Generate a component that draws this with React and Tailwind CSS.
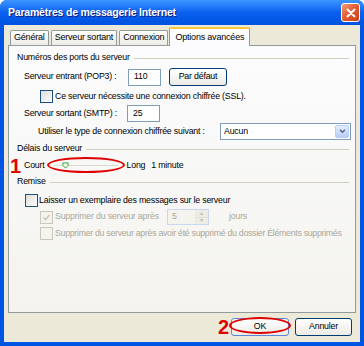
import React from 'react'

const font = { fontFamily: '"Liberation Sans", Arial, sans-serif' }

function GroupLabel({ children }) {
  return (
    <div className="flex items-center h-[12px] pl-[8px] pr-[6px]">
      <span className="pr-[4px] whitespace-nowrap">{children}</span>
      <div className="flex-1 h-px bg-[#D0D0BF]" />
    </div>
  )
}

function Checkbox({ checked, disabled }) {
  return (
    <span
      className={`relative inline-block w-[13px] h-[13px] shrink-0 border ${
        disabled ? 'border-[#CAC8BB] bg-[#F4F3EE]' : 'border-[#1C5180] bg-gradient-to-br from-[#DCDCD7] to-white'
      }`}
    >
      {checked && (
        <svg viewBox="0 0 11 11" className="absolute inset-0 w-[11px] h-[11px]">
          <path d="M2.5 5.5 L4.5 7.5 L8.5 3" fill="none" stroke={disabled ? '#CAC8BB' : '#21A121'} strokeWidth="1.6" />
        </svg>
      )}
    </span>
  )
}

function Input({ value, width, disabled }) {
  return (
    <div
      className={`h-[17px] shrink-0 border border-[#7F9DB9] flex items-center pl-[5px] ${disabled ? 'bg-[#F4F3EE] text-[#ACA899]' : 'bg-white'}`}
      style={{ width }}
    >
      {value}
    </div>
  )
}

function XpButton({ children, className = '' }) {
  return (
    <div
      className={`h-[18px] shrink-0 flex items-center justify-center rounded-[3px] border border-[#003C74] bg-gradient-to-b from-white to-[#ECEBE6] ${className}`}
    >
      {children}
    </div>
  )
}

export default function App() {
  return (
    <div style={font} className="w-[364px] h-[346px] flex flex-col bg-[#0054E3] rounded-t-[7px] overflow-hidden text-[8.8px] tracking-[-0.2px] whitespace-nowrap text-black">
      {/* title bar */}
      <div className="h-[25px] flex items-center justify-between pl-[8px] pr-[4px] bg-gradient-to-b from-[#3D95FF] via-[#0A5FEE] to-[#0053E0]">
        <span className="text-white font-bold text-[10.5px] tracking-[-0.2px]" style={{ textShadow: '1px 1px #0A1E80' }}>
          Paramètres de messagerie Internet
        </span>
        <div className="w-[19px] h-[19px] rounded-[3px] border border-white bg-gradient-to-br from-[#F09A78] via-[#E3582D] to-[#C7401A] flex items-center justify-center">
          <svg viewBox="0 0 10 10" className="w-[10px] h-[10px]">
            <path d="M1.5 1.5 L8.5 8.5 M8.5 1.5 L1.5 8.5" stroke="white" strokeWidth="2" strokeLinecap="round" />
          </svg>
        </div>
      </div>

      {/* body */}
      <div className="flex-1 mx-[4px] mb-[4px] bg-[#ECE9D8] flex flex-col px-[4px] pt-[2px]">
        {/* tabs */}
        <div className="flex items-end h-[18px] pl-[2px] relative z-10 text-[9px]">
          <div className="h-[15px] px-[3px] flex items-center border border-b-0 border-[#919B9C] bg-gradient-to-b from-white to-[#ECEBE6] rounded-t-[2px]">Général</div>
          <div className="ml-[2px] h-[15px] px-[3px] flex items-center border border-b-0 border-[#919B9C] bg-gradient-to-b from-white to-[#ECEBE6] rounded-t-[2px]">Serveur sortant</div>
          <div className="ml-[2px] h-[15px] px-[3px] flex items-center border border-b-0 border-[#919B9C] bg-gradient-to-b from-white to-[#ECEBE6] rounded-t-[2px]">Connexion</div>
          <div className="ml-[1px] h-[19px] -mb-px px-[5px] flex items-center border border-b-0 border-[#919B9C] border-t-2 border-t-[#FFC83C] bg-[#FCFCFE] rounded-t-[2px]">Options avancées</div>
        </div>

        {/* panel */}
        <div className="h-[268px] border border-[#919B9C] bg-gradient-to-b from-[#FCFCFE] to-[#F4F3EE] flex flex-col pt-[6px]">
          <GroupLabel>Numéros des ports du serveur</GroupLabel>

          <div className="mt-[4px] flex items-center h-[18px] pl-[15px]">
            <span className="w-[104px]">Serveur entrant (POP3) :</span>
            <Input value="110" width={33} />
            <XpButton className="ml-[8px] w-[58px]">Par défaut</XpButton>
          </div>

          <div className="mt-[4px] flex items-center h-[13px] pl-[31px] gap-[2px]">
            <Checkbox />
            <span>Ce serveur nécessite une connexion chiffrée (SSL).</span>
          </div>

          <div className="mt-[2px] flex items-center h-[17px] pl-[15px]">
            <span className="w-[103px]">Serveur sortant (SMTP) :</span>
            <Input value="25" width={33} />
          </div>

          <div className="mt-[1px] flex items-center h-[17px] pl-[29px]">
            <span className="w-[182px]">Utiliser le type de connexion chiffrée suivant :</span>
            <div className="w-[131px] h-[17px] border border-[#7F9DB9] bg-white flex items-center justify-between pl-[3px] pr-px">
              <span>Aucun</span>
              <div className="w-[14px] h-[13px] rounded-[2px] bg-gradient-to-b from-[#E6EEFC] to-[#B9CCF6] border border-[#B9CCF6] flex items-center justify-center">
                <svg viewBox="0 0 8 6" className="w-[7px] h-[5px]">
                  <path d="M1 1 L4 4 L7 1" fill="none" stroke="#4D6185" strokeWidth="1.6" />
                </svg>
              </div>
            </div>
          </div>

          <div className="mt-[3px]">
            <GroupLabel>Délais du serveur</GroupLabel>
          </div>

          <div className="mt-[2px] flex items-center h-[17px] relative">
            <span className="text-[#E00000] font-bold text-[20px] leading-none w-[15px] pl-[1px]">1</span>
            <span>Court</span>
            <div className="ml-[5px] w-[72px] h-[17px] relative flex items-center">
              <div className="absolute left-[4px] right-[4px] top-[8px] h-[2px] border-t border-[#ACA899] border-b border-b-white opacity-40" />
              <svg viewBox="0 0 8 8" className="absolute left-[12px] top-[5px] w-[7px] h-[7px]">
                <path d="M1 1 H7 V4 L4 7 L1 4 Z" fill="#F4F3EE" stroke="#21A121" strokeWidth="1" />
              </svg>
              <div className="absolute -left-[3px] top-0 w-[78px] h-[16px] rounded-[50%] border-2 border-[#E00000]" />
            </div>
            <span className="ml-[5px]">Long</span>
            <span className="ml-[6px]">1 minute</span>
          </div>

          <div className="mt-[2px]">
            <GroupLabel>Remise</GroupLabel>
          </div>

          <div className="mt-[6px] flex items-center h-[13px] pl-[16px] gap-[1px]">
            <Checkbox />
            <span>Laisser un exemplaire des messages sur le serveur</span>
          </div>

          <div className="mt-[2px] flex items-center h-[16px] pl-[31px] text-[#ACA899]">
            <Checkbox checked disabled />
            <span className="ml-[2px] w-[112px]">Supprimer du serveur après</span>
            <div className="w-[42px] h-[16px] border border-[#C9D7F1] bg-[#F4F3EE] flex items-center justify-between pl-[4px]">
              <span>5</span>
              <div className="w-[13px] h-[14px] flex flex-col bg-[#EEEDE5]">
                <div className="flex-1 border-b border-[#E2E0D4] flex items-center justify-center">
                  <svg viewBox="0 0 6 4" className="w-[5px] h-[3px]"><path d="M0 4 L3 0 L6 4 Z" fill="#C9C7BA" /></svg>
                </div>
                <div className="flex-1 flex items-center justify-center">
                  <svg viewBox="0 0 6 4" className="w-[5px] h-[3px]"><path d="M0 0 L3 4 L6 0 Z" fill="#C9C7BA" /></svg>
                </div>
              </div>
            </div>
            <span className="ml-[20px]">jours</span>
          </div>

          <div className="mt-[2px] flex items-center h-[13px] pl-[31px] gap-[2px] text-[#ACA899]">
            <Checkbox disabled />
            <span className="tracking-[-0.3px]">Supprimer du serveur après avoir été supprimé du dossier Éléments supprimés</span>
          </div>
        </div>

        {/* buttons */}
        <div className="mt-[5px] flex items-center justify-end pr-[4px] h-[18px]">
          <span className="text-[#E00000] font-bold text-[20px] leading-none mr-[2px]">2</span>
          <div className="relative">
            <XpButton className="w-[58px] border-[#5C86D8]">OK</XpButton>
            <div className="absolute -left-[2px] -top-px w-[62px] h-[17px] rounded-[50%] border-2 border-[#E00000]" />
          </div>
          <XpButton className="ml-[6px] w-[57px]">Annuler</XpButton>
        </div>
      </div>
    </div>
  )
}
